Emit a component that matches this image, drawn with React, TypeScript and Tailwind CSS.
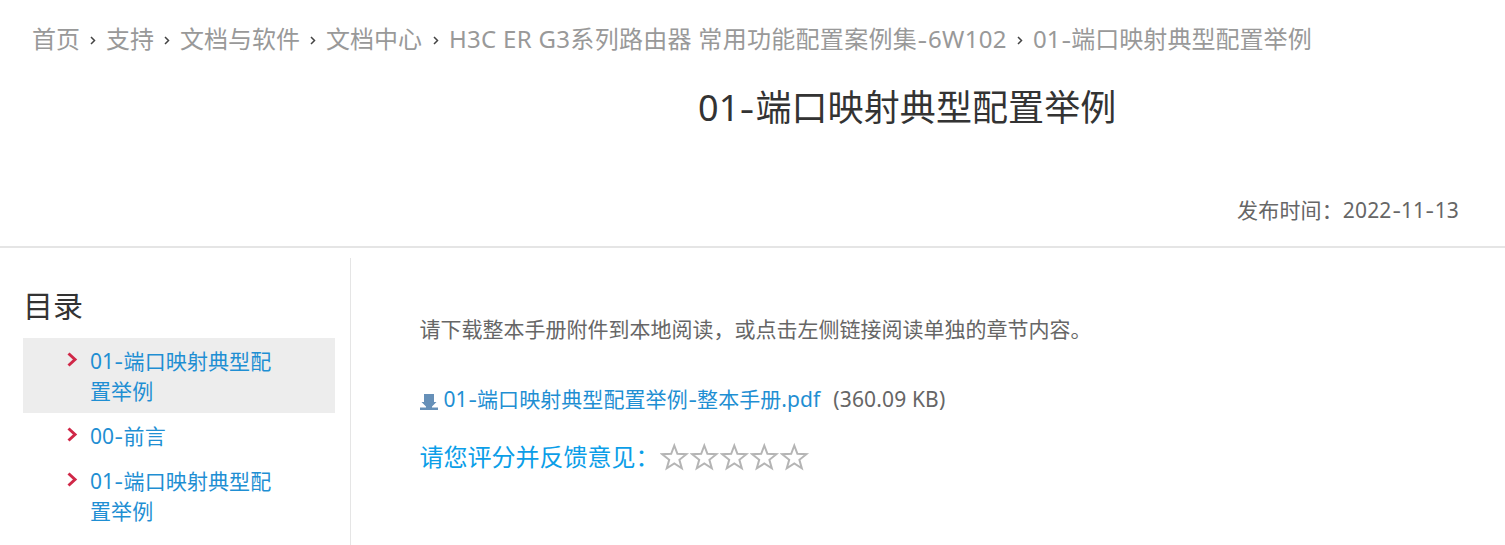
import { Fragment } from "react";

const crumbs = [
  { label: "首页", width: "w-[48px]" },
  { label: "支持", width: "w-[48px]" },
  { label: "文档与软件", width: "w-[120px]" },
  { label: "文档中心", width: "w-[97px]" },
  { label: "H3C ER G3系列路由器 常用功能配置案例集-6W102", width: "w-[558px] tracking-[0.3px]" },
  { label: "01-端口映射典型配置举例", width: "w-[280px] tracking-[0.05px]" },
];

const chapters = [
  { lines: ["01-端口映射典型配", "置举例"], active: true },
  { lines: ["00-前言"], active: false },
  { lines: ["01-端口映射典型配", "置举例"], active: false },
];

// Hyphens are drawn a little wider than the font's own
function Label({ text }: { text: string }) {
  return (
    <>
      {text.split("-").map((part, i) => (
        <Fragment key={i}>
          {i > 0 && <span className="inline-block scale-x-125 px-[0.06em]">-</span>}
          {part}
        </Fragment>
      ))}
    </>
  );
}

function Chevron() {
  return (
    <svg width="6" height="9" viewBox="0 0 6 9" fill="none" className="mt-[3px] shrink-0">
      <path d="M1 1l3.5 3.5L1 8" stroke="#444" strokeWidth="1.5" />
    </svg>
  );
}

function RedArrow() {
  return (
    <svg width="11" height="15" viewBox="0 0 11 15" fill="none" className="mt-[6px] shrink-0">
      <path d="M1.5 1.5l6.5 6-6.5 6" stroke="#d02848" strokeWidth="3" />
    </svg>
  );
}

function DownloadIcon() {
  return (
    <svg width="18" height="16" viewBox="0 0 18 16" className="mt-[3px] shrink-0" fill="#6690b8">
      <path d="M4 0h10v8h2.5L12 12.5V14H6v-1.5L1.5 8H4z" />
      <path d="M0 13.5h18V16H0z" />
    </svg>
  );
}

function Star() {
  return (
    <svg width="30" height="30" viewBox="0 0 30 30" fill="#fff" className="shrink-0">
      <path
        d="M14.3 3.5l3.1 8.3 9 .4-7 5.6 2.4 8.5-7.5-4.8-7.5 4.8 2.4-8.5-7-5.6 9-.4z"
        stroke="#b5b5b5"
        strokeWidth="2"
      />
    </svg>
  );
}

export default function App() {
  return (
    <div className="h-[545px] w-[1505px] overflow-hidden bg-white font-['Noto_Sans','Noto_Sans_CJK_SC',sans-serif] text-[#666]">
      <nav className="flex h-[77px] items-center gap-[10px] pl-8 text-2xl text-[#999]">
        {crumbs.map((crumb, i) => (
          <Fragment key={crumb.label}>
            {i > 0 && <Chevron />}
            <span className={`whitespace-nowrap ${crumb.width}`}>
              <Label text={crumb.label} />
            </span>
          </Fragment>
        ))}
      </nav>
      <h1 className="h-[111px] pl-[698px] pt-px text-4xl leading-[60px] tracking-[0.1px] text-[#333]">
        <Label text="01-端口映射典型配置举例" />
      </h1>
      <div className="h-[60px] border-b-2 border-[#e5e5e5] pr-[46px] text-right text-[21px] leading-[44px] tracking-[0.15px]">
        <Label text="发布时间：2022-11-13" />
      </div>
      <div className="flex pt-[10px]">
        <aside className="h-[290px] w-[351px] border-r border-[#e5e5e5] pl-[23px] pt-[26px]">
          <h2 className="h-[54px] text-[30px] leading-[44px] text-[#333]">目录</h2>
          <ul className="w-[312px] text-[21px] leading-[30px] text-[#1f8fd3]">
            {chapters.map((chapter, i) => (
              <li
                key={i}
                className={`flex gap-3 py-[7.5px] pl-[44px] ${chapter.active ? "bg-[#ededed]" : ""}`}
              >
                <RedArrow />
                <div className="tracking-[0.1px]">
                  {chapter.lines.map((line) => (
                    <p key={line} className="whitespace-nowrap">
                      <Label text={line} />
                    </p>
                  ))}
                </div>
              </li>
            ))}
          </ul>
        </aside>
        <main className="pl-[68.5px] pt-[54px] text-[21px]">
          <p className="h-[71px] leading-[34px]">
            请下载整本手册附件到本地阅读，或点击左侧链接阅读单独的章节内容。
          </p>
          <div className="flex h-[34px] items-center">
            <DownloadIcon />
            <a className="ml-[6px] tracking-[0.07px] text-[#1f8fd3]">
              <Label text="01-端口映射典型配置举例-整本手册.pdf" />
            </a>
            <span className="ml-[13px] tracking-[0.15px]">(360.09 KB)</span>
          </div>
          <div className="mt-[23px] flex h-[34px] items-center text-2xl text-[#0b9ee8]">
            <span className="w-[240px] whitespace-nowrap">请您评分并反馈意见：</span>
            <div className="flex">
              {[1, 2, 3, 4, 5].map((n) => (
                <Star key={n} />
              ))}
            </div>
          </div>
        </main>
      </div>
    </div>
  );
}
